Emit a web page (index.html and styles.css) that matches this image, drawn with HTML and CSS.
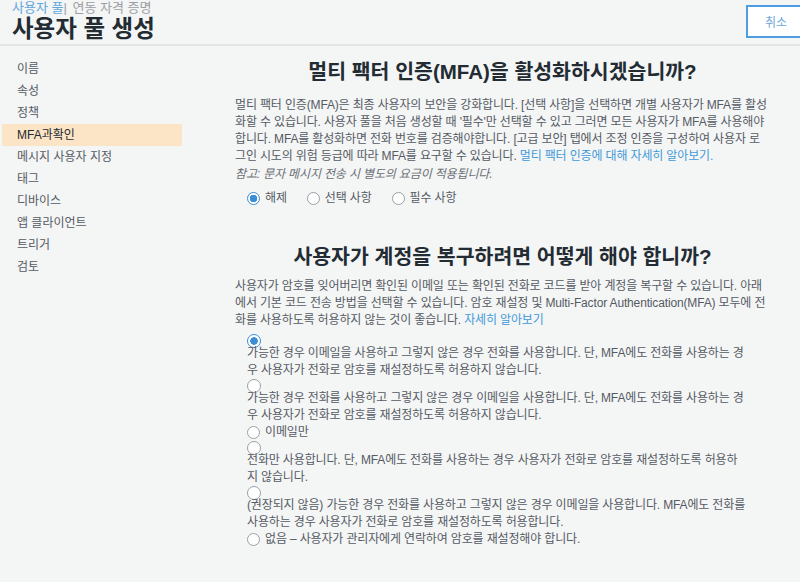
FILE: index.html
```html
<!DOCTYPE html>
<html lang="ko">
<head>
  <meta charset="UTF-8">
  <title>사용자 풀 생성</title>
  <link rel="stylesheet" href="styles.css">
</head>
<body>
  <header class="header">
    <div class="header-left">
      <div class="crumbs"><a href="#">사용자 풀</a><span class="sep">|</span> 연동 자격 증명</div>
      <h1 class="title">사용자 풀 생성</h1>
    </div>
    <button class="cancel">취소</button>
  </header>

  <div class="layout">
    <nav class="sidebar">
      <a class="nav-item" href="#">이름</a>
      <a class="nav-item" href="#">속성</a>
      <a class="nav-item" href="#">정책</a>
      <a class="nav-item active" href="#">MFA과확인</a>
      <a class="nav-item" href="#">메시지 사용자 지정</a>
      <a class="nav-item" href="#">태그</a>
      <a class="nav-item" href="#">디바이스</a>
      <a class="nav-item" href="#">앱 클라이언트</a>
      <a class="nav-item" href="#">트리거</a>
      <a class="nav-item" href="#">검토</a>
    </nav>

    <main class="main">
      <section class="section">
        <h2 class="section-title">멀티 팩터 인증(MFA)을 활성화하시겠습니까?</h2>
        <p class="desc">멀티 팩터 인증(MFA)은 최종 사용자의 보안을 강화합니다. [선택 사항]을 선택하면 개별 사용자가 MFA를 활성화할 수 있습니다. 사용자 풀을 처음 생성할 때 '필수'만 선택할 수 있고 그러면 모든 사용자가 MFA를 사용해야 합니다. MFA를 활성화하면 전화 번호를 검증해야합니다. [고급 보안] 탭에서 조정 인증을 구성하여 사용자 로그인 시도의 위험 등급에 따라 MFA를 요구할 수 있습니다. <a href="#">멀티 팩터 인증에 대해 자세히 알아보기.</a></p>
        <p class="note">참고: 문자 메시지 전송 시 별도의 요금이 적용됩니다.</p>
        <div class="inline-radios">
          <label class="radio"><span class="dot checked"></span>해제</label>
          <label class="radio"><span class="dot"></span>선택 사항</label>
          <label class="radio"><span class="dot"></span>필수 사항</label>
        </div>
      </section>

      <section class="section recover">
        <h2 class="section-title">사용자가 계정을 복구하려면 어떻게 해야 합니까?</h2>
        <p class="desc">사용자가 암호를 잊어버리면 확인된 이메일 또는 확인된 전화로 코드를 받아 계정을 복구할 수 있습니다. 아래에서 기본 코드 전송 방법을 선택할 수 있습니다. 암호 재설정 및 Multi-Factor Authentication(MFA) 모두에 전화를 사용하도록 허용하지 않는 것이 좋습니다. <a href="#">자세히 알아보기</a></p>
        <div class="options">
          <div class="option stacked">
            <span class="dot checked"></span>
            <span class="option-text">가능한 경우 이메일을 사용하고 그렇지 않은 경우 전화를 사용합니다. 단, MFA에도 전화를 사용하는 경우 사용자가 전화로 암호를 재설정하도록 허용하지 않습니다.</span>
          </div>
          <div class="option stacked">
            <span class="dot"></span>
            <span class="option-text">가능한 경우 전화를 사용하고 그렇지 않은 경우 이메일을 사용합니다. 단, MFA에도 전화를 사용하는 경우 사용자가 전화로 암호를 재설정하도록 허용하지 않습니다.</span>
          </div>
          <div class="option">
            <span class="dot"></span>
            <span class="option-text">이메일만</span>
          </div>
          <div class="option stacked">
            <span class="dot"></span>
            <span class="option-text">전화만 사용합니다. 단, MFA에도 전화를 사용하는 경우 사용자가 전화로 암호를 재설정하도록 허용하지 않습니다.</span>
          </div>
          <div class="option stacked">
            <span class="dot"></span>
            <span class="option-text">(권장되지 않음) 가능한 경우 전화를 사용하고 그렇지 않은 경우 이메일을 사용합니다. MFA에도 전화를 사용하는 경우 사용자가 전화로 암호를 재설정하도록 허용합니다.</span>
          </div>
          <div class="option">
            <span class="dot"></span>
            <span class="option-text">없음 – 사용자가 관리자에게 연락하여 암호를 재설정해야 합니다.</span>
          </div>
        </div>
      </section>
    </main>
  </div>
</body>
</html>
```

FILE: styles.css
```css
* {
  box-sizing: border-box;
}

body {
  margin: 0;
  font-family: "Liberation Sans", Arial, "Noto Sans CJK KR", sans-serif;
  background-color: #f4f5f5;
  color: #545b64;
  font-size: 12px;
  overflow: hidden;
}

a {
  color: #3f99d9;
  text-decoration: none;
}

.header {
  display: flex;
  justify-content: space-between;
  align-items: flex-start;
  height: 46px;
  padding: 0 0 0 12px;
  border-bottom: 2px solid #e3e5e5;
}

.crumbs {
  font-size: 13px;
  color: #9a9fa4;
  line-height: 14px;
  margin-top: 1px;
}

.crumbs a {
  color: #62a6dd;
}

.crumbs .sep {
  color: #9a9fa4;
  margin-right: 2px;
}

.title {
  margin: 0;
  font-size: 23.5px;
  font-weight: bold;
  color: #232b33;
  line-height: 28px;
}

.cancel {
  margin-top: 5px;
  width: 60px;
  height: 33px;
  margin-right: -6px;
  background: #fff;
  border: 2px solid #4d9de0;
  color: #6fa8d8;
  font-family: inherit;
  font-size: 12px;
  text-align: left;
  padding-left: 17px;
}

.layout {
  display: flex;
}

.sidebar {
  width: 182px;
  padding-top: 12px;
  display: flex;
  flex-direction: column;
  padding-left: 2px;
}

.nav-item {
  display: block;
  height: 22px;
  line-height: 22px;
  padding-left: 15px;
  color: #545b64;
  font-size: 12px;
}

.nav-item.active {
  background-color: #fbe5c6;
  color: #232b33;
}

.main {
  flex: 1;
  padding: 14px 30px 0 53px;
  letter-spacing: -0.15px;
}

.section-title {
  margin: 0 0 13px;
  text-align: center;
  font-size: 20.5px;
  font-weight: bold;
  color: #232b33;
  line-height: 24px;
  letter-spacing: 0;
}

.desc {
  margin: 0;
  line-height: 17px;
}

.note {
  margin: 1px 0 0;
  font-style: italic;
  color: #6b7076;
  line-height: 17px;
}

.inline-radios {
  display: flex;
  gap: 20px;
  margin-top: 7px;
  padding-left: 12px;
}

.radio {
  display: flex;
  align-items: center;
  gap: 5px;
  line-height: 17px;
}

.dot {
  display: inline-block;
  flex: none;
  width: 13px;
  height: 13px;
  border-radius: 50%;
  border: 1px solid #9ba0a5;
  background: #fff;
}

.dot.checked {
  border-color: #3a8ed6;
  background: radial-gradient(circle, #3a8ed6 0 3.5px, #fff 4px);
}

.recover {
  margin-top: 38px;
}

.recover .section-title {
  margin-bottom: 9px;
}

.options {
  margin-top: 5px;
  padding-left: 12px;
  width: 510px;
}

.option {
  display: flex;
  align-items: center;
  gap: 5px;
  line-height: 17px;
}

.option.stacked {
  flex-direction: column;
  align-items: flex-start;
  gap: 0;
}

.option.stacked .dot {
  width: 14px;
  height: 14px;
  margin-bottom: -3px;
}
```
